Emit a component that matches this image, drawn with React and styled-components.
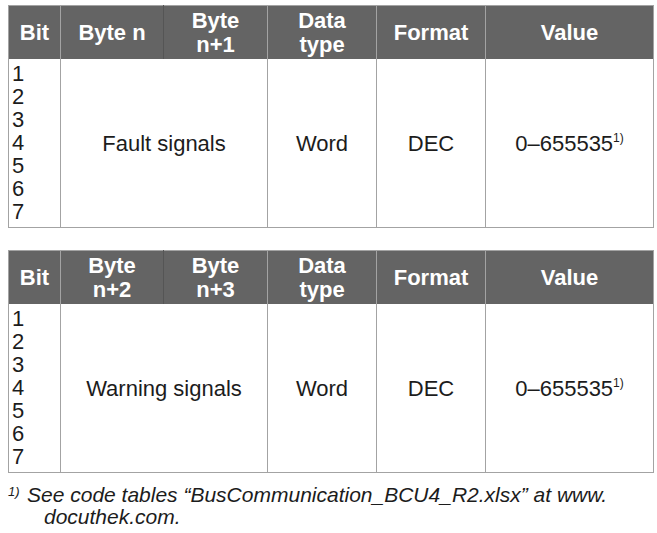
import React from "react";
import styled, { createGlobalStyle } from "styled-components";

const Global = createGlobalStyle`
  html, body { margin: 0; padding: 0; background: #fff; }
  body { font-family: "Liberation Sans", Arial, Helvetica, sans-serif; color: #1c1c1c; }
`;

const Page = styled.div`
  padding: 5px 4px 0 8px;
  width: 645px;
  display: flex;
  flex-direction: column;
  gap: 22px;
`;

const Table = styled.table`
  width: 645px;
  border-collapse: collapse;
  table-layout: fixed;
  border: 1px solid #a3a3a3;
`;

const Head = styled.th`
  background: #646464;
  color: #fff;
  font-weight: bold;
  font-size: 22px;
  line-height: 24px;
  height: 53px;
  padding: 0;
  text-align: center;
  vertical-align: middle;
  border-left: 1px solid ${(p) => (p.$inner ? "#555" : "#a3a3a3")};
  &:first-child { border-left: none; }
`;

const Cell = styled.td`
  font-size: 22px;
  line-height: 23px;
  padding: ${(p) => (p.$bits ? "3px 0 4px 3px" : "0")};
  text-align: ${(p) => (p.$bits ? "left" : "center")};
  vertical-align: middle;
  border-left: 1px solid #a3a3a3;
  &:first-child { border-left: none; }
`;

const Sup = styled.sup`
  font-size: 12px;
  vertical-align: 9px;
  line-height: 0;
`;

const Note = styled.div`
  display: flex;
  font-style: italic;
  font-size: 21px;
  line-height: 22px;
  margin-top: -11px;
`;

const NoteMark = styled.span`
  font-size: 13px;
  line-height: 16px;
  width: 19px;
  flex: none;
`;

const NoteText = styled.span`
  padding-left: 17px;
  text-indent: -17px;
`;

const cols = [52, 103, 104, 109, 109, 168];

function DataTable({ b1, b2, label }) {
  return (
    <Table>
      <colgroup>
        {cols.map((w, i) => (
          <col key={i} style={{ width: w }} />
        ))}
      </colgroup>
      <thead>
        <tr>
          <Head>Bit</Head>
          <Head>{b1}</Head>
          <Head $inner>{b2}</Head>
          <Head>
            Data
            <br />
            type
          </Head>
          <Head>Format</Head>
          <Head>Value</Head>
        </tr>
      </thead>
      <tbody>
        <tr>
          <Cell $bits>
            1<br />2<br />3<br />4<br />5<br />6<br />7
          </Cell>
          <Cell colSpan={2}>{label}</Cell>
          <Cell>Word</Cell>
          <Cell>DEC</Cell>
          <Cell>
            0–655535<Sup>1)</Sup>
          </Cell>
        </tr>
      </tbody>
    </Table>
  );
}

export default function App() {
  return (
    <>
      <Global />
      <Page>
        <DataTable b1="Byte n" b2={<>Byte<br />n+1</>} label="Fault signals" />
        <DataTable
          b1={<>Byte<br />n+2</>}
          b2={<>Byte<br />n+3</>}
          label="Warning signals"
        />
        <Note>
          <NoteMark>1)</NoteMark>
          <NoteText>
            See code tables “BusCommunication_BCU4_R2.xlsx” at www.
            <br />
            docuthek.com.
          </NoteText>
        </Note>
      </Page>
    </>
  );
}
